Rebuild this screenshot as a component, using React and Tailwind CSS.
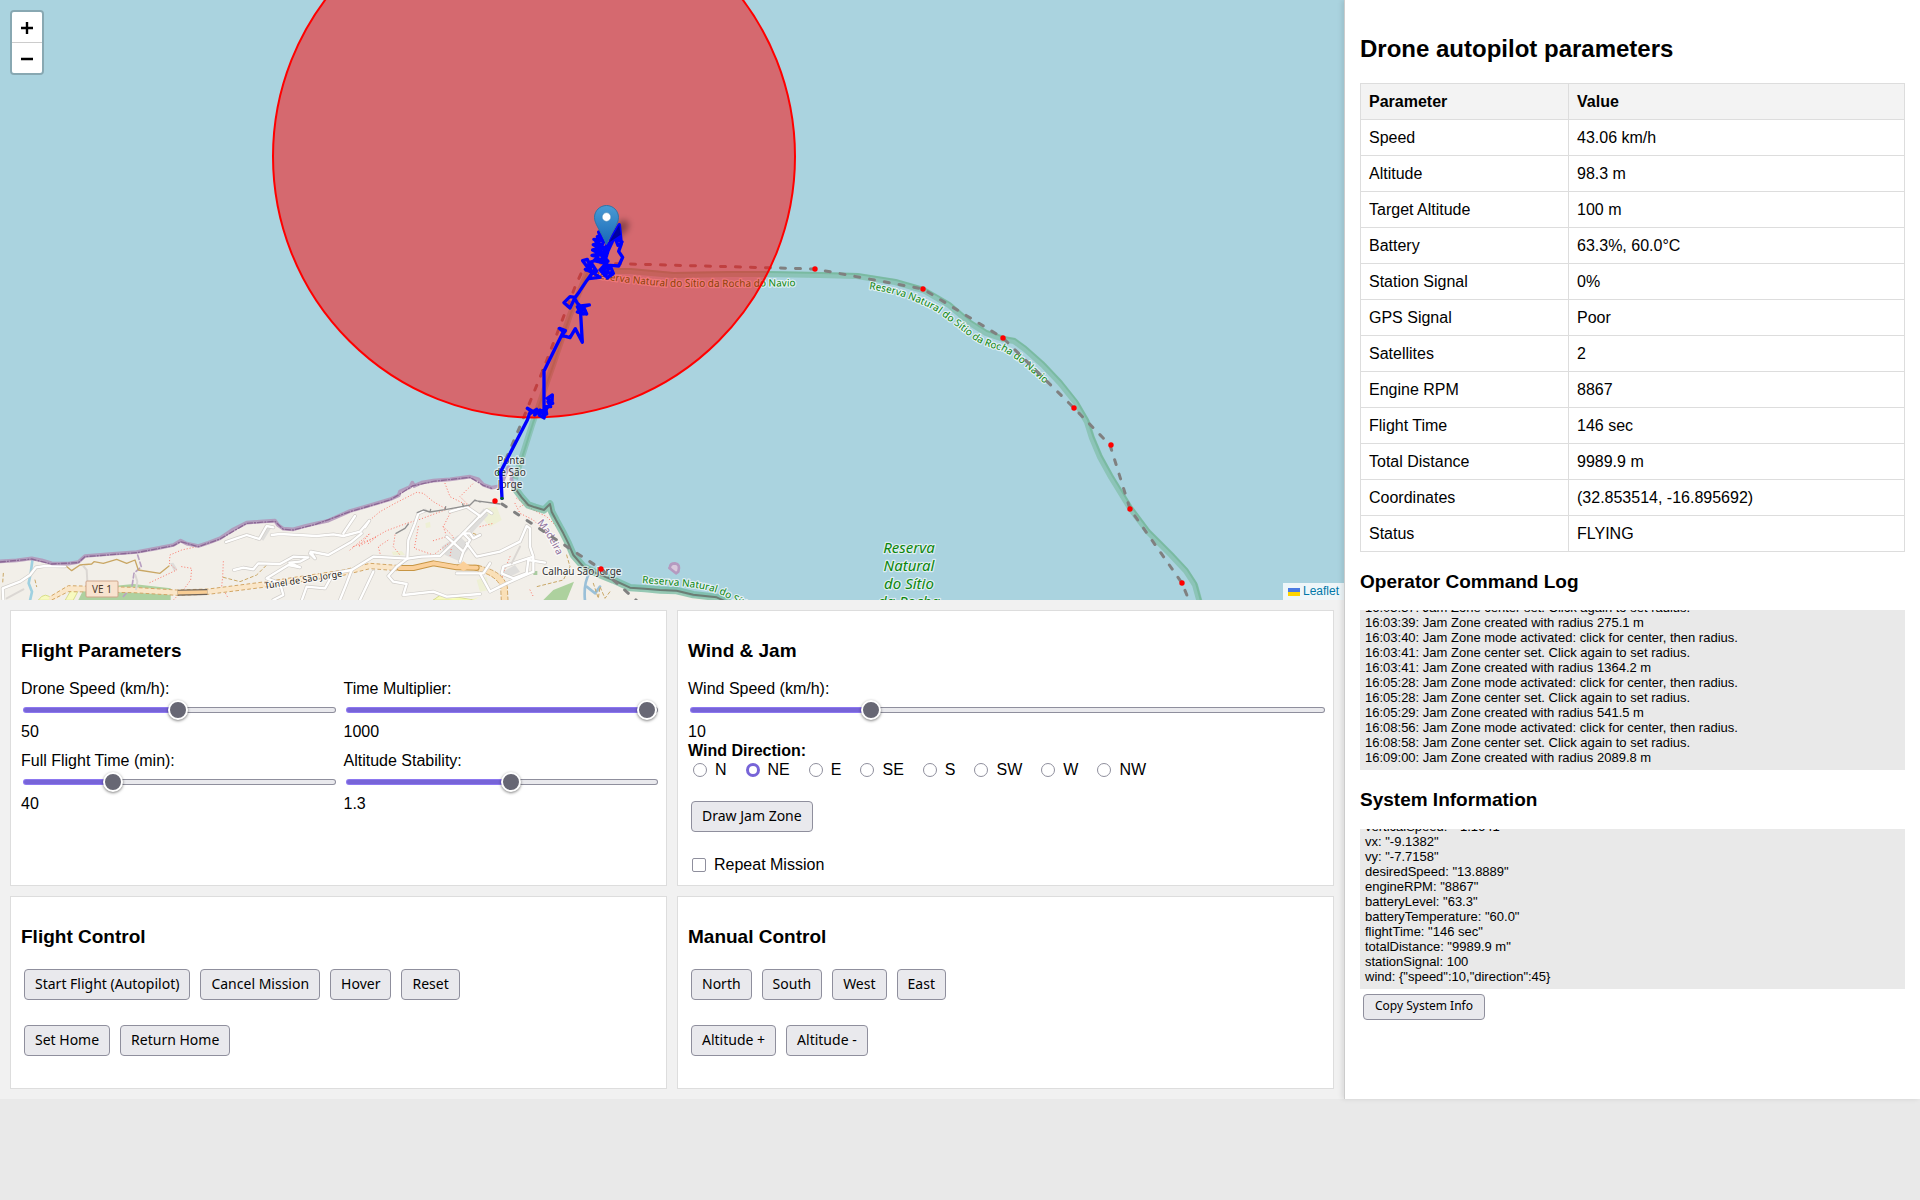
import React, { useState } from "react";

const PARAMETERS = [
  ["Speed", "43.06 km/h"],
  ["Altitude", "98.3 m"],
  ["Target Altitude", "100 m"],
  ["Battery", "63.3%, 60.0°C"],
  ["Station Signal", "0%"],
  ["GPS Signal", "Poor"],
  ["Satellites", "2"],
  ["Engine RPM", "8867"],
  ["Flight Time", "146 sec"],
  ["Total Distance", "9989.9 m"],
  ["Coordinates", "(32.853514, -16.895692)"],
  ["Status", "FLYING"],
];

const LOG = [
  "16:03:37: Jam Zone center set. Click again to set radius.",
  "16:03:39: Jam Zone created with radius 275.1 m",
  "16:03:40: Jam Zone mode activated: click for center, then radius.",
  "16:03:41: Jam Zone center set. Click again to set radius.",
  "16:03:41: Jam Zone created with radius 1364.2 m",
  "16:05:28: Jam Zone mode activated: click for center, then radius.",
  "16:05:28: Jam Zone center set. Click again to set radius.",
  "16:05:29: Jam Zone created with radius 541.5 m",
  "16:08:56: Jam Zone mode activated: click for center, then radius.",
  "16:08:58: Jam Zone center set. Click again to set radius.",
  "16:09:00: Jam Zone created with radius 2089.8 m",
];

const SYSTEM = [
  'verticalSpeed: "-1.1641"',
  'vx: "-9.1382"',
  'vy: "-7.7158"',
  'desiredSpeed: "13.8889"',
  'engineRPM: "8867"',
  'batteryLevel: "63.3"',
  'batteryTemperature: "60.0"',
  'flightTime: "146 sec"',
  'totalDistance: "9989.9 m"',
  "stationSignal: 100",
  'wind: {"speed":10,"direction":45}',
];

const DIRECTIONS = ["N", "NE", "E", "SE", "S", "SW", "W", "NW"];

const WAYPOINTS = [
  [495, 501], [601, 569], [815, 269], [923, 289], [1003, 338],
  [1074, 408], [1111, 445], [1130, 509], [1182, 583],
];

const COAST =
  "M0 364L50 361L95 355L125 361L155 370L205 371L235 366L255 348L330 342L410 336L470 325L520 315L542 302L560 311L595 318L625 308L660 295L700 268L740 248L790 244L825 242L835 256L850 266L880 268L915 258L950 250L985 242L1050 213L1110 196L1170 178L1196 166L1200 154L1230 141L1237 128L1242 138L1265 128L1300 122L1350 118L1410 110L1435 118L1450 134L1475 143L1497 139L1508 125L1515 105L1525 82L1538 100L1534 118L1545 145L1565 172L1585 195L1605 202L1632 210L1645 195L1655 192L1648 222L1668 240L1690 280L1705 310L1720 345L1750 380L1790 400L1840 420L1890 445L1935 450L1980 452L2030 455L2080 470L2150 475L2190 490";

const RESERVE_COAST =
  "M1545 145L1565 172L1585 195L1605 202L1632 210L1650 192L1655 215L1668 240L1690 280L1705 310L1720 345L1750 380L1790 400L1840 420L1890 443L1935 446L1980 450L2030 452L2080 464L2150 472L2190 490";

const RESERVE_SEA =
  "M515 479L532 425L553 365L570 315L587 273L604 271L630 271L673 275L730 274L767 274L820 275L857 276L895 282L923 290L949 305L970 323L986 333L1003 339L1014 341L1025 349L1043 365L1060 383L1076 403L1087 422L1092 438L1100 457L1111 477L1130 508L1148 532L1171 555L1186 571L1195 585L1200 603";

const TRACK =
  "M-54 925L-58 845L22 690L32 662L22 655L40 665L28 672L50 658L44 675L60 660L58 676L72 683L66 662L80 672L76 650L92 650L84 635L98 640L82 625L97 615L96 640L80 655L72 684L72 543L130 425L118 415L136 422L126 436L150 443L166 416L187 457L182 372L172 350L190 372L172 366L200 372L190 350L208 345L182 348L196 362L172 340L164 325L150 354L132 338L150 320L166 322L178 305L200 272L216 250L206 266L240 262L222 250L196 238L206 236L188 212L202 208L212 234L198 240L230 244L212 216L238 208L262 224L250 244L276 250L262 264L280 250L270 226L296 228L308 202L296 184L304 162L298 104L276 140L260 196L252 218L266 236L256 258L240 240L258 220L222 212L234 200L216 196L240 192L218 180L238 176L220 164L246 168L222 148L244 152L236 126L254 148L240 180L258 170L246 206L262 190L272 150L290 122L296 150L306 156L294 166L284 140L256 200L244 214L264 214L240 186L232 140L248 204L228 156L252 196L262 160";

const HALO = { paintOrder: "stroke", stroke: "#ffffff", strokeOpacity: 0.6, strokeWidth: 2.5, strokeLinejoin: "round" };

function FlightMap() {
  return (
    <section aria-label="Flight map" className="relative h-[600px] overflow-hidden bg-[#aad3df]">
      <svg className="block h-full w-full" viewBox="0 0 1344 600" preserveAspectRatio="xMidYMid slice" fontFamily="'Noto Sans', sans-serif" role="img">
        <defs>
          <linearGradient id="pin" x1="0" y1="0" x2="0" y2="1">
            <stop offset="0" stopColor="#4a9bd4" />
            <stop offset="1" stopColor="#1668b8" />
          </linearGradient>
          <filter id="soft" x="-50%" y="-50%" width="200%" height="200%">
            <feGaussianBlur stdDeviation="3" />
          </filter>
          <path id="labelWest" d="M593 278L630 283L670 287L720 287L830 286" />
          <path id="labelEast" d="M869 289Q905 294 937 312Q955 325 969 336Q981 346 1003 351Q1020 360 1050 389" />
          <path id="labelSouth" d="M642 583L678 586Q706 588 722 595L760 616" />
          <path id="labelTunnel" d="M265 589L352 575" />
          <path id="labelMadeira" d="M537 523Q549 536 562 566" />
        </defs>

        <g transform="translate(0 440) scale(0.33333)" fill="none" strokeLinecap="round" strokeLinejoin="round">
          <path d={COAST + "L0 500Z"} fill="#f2efe9" />
          <path d="M235 480L250 450L340 438L400 432L512 445L512 480Z" fill="#aed1a0" />
          <path d="M1630 480L1660 450L1722 425L1700 480Z" fill="#add19e" />
          <path d="M115 480Q135 450 160 480ZM196 480L212 452Q230 436 236 450L220 480ZM1300 480L1320 466L1375 472L1420 480Z" fill="#f7fabf" stroke="#c8cf70" strokeWidth="2" />
          <path d="M1340 482Q1370 470 1420 480L1438 471L1400 484Z" fill="#f3fbb0" />
          <path d="M1455 205L1490 200L1505 240L1470 260L1452 240ZM1430 420L1460 410L1468 450L1440 455ZM1276 250L1290 245L1292 262L1278 264ZM1175 335L1205 333L1215 345L1180 346Z" fill="#eef0d5" />
          <path d="M1325 320L1375 285L1412 320L1375 362L1335 345ZM1400 260L1452 205L1465 225L1415 280ZM1510 395L1545 375L1560 395L1520 415ZM778 295L800 258L815 262L790 302ZM510 370L520 368L532 388L522 394Z" fill="#dedddb" />
          <path d="M1600 393h12v12h-12z" fill="#a9cba0" />

          <path d="M97 362L92 400L86 430L96 455L90 482" stroke="#9fd0e0" strokeWidth="8" />
          <path d="M1768 400Q1750 430 1755 482M1760 440L1785 460L1800 440" stroke="#9ac0d8" strokeWidth="8" />
          <path d="M413 345L424 380L402 400L396 440L365 475" stroke="#b9a1c2" strokeWidth="5" strokeDasharray="14 8" />

          <g stroke="#fa8072" strokeWidth="3" strokeDasharray="1 8">
            <path d="M640 305L600 318L545 330L510 345L508 370L530 390L445 430M545 380L575 385L572 420L550 450L520 480M670 365L668 410L665 440L685 475" />
            <path d="M1110 240L1140 215L1185 190L1250 157L1270 160L1300 185L1340 208M1050 330L1110 280L1075 320L1160 272L1220 250L1260 238L1340 208M1060 320L1130 290L1100 315M1185 285L1180 320L1200 345M1140 340L1135 320L1165 300M1255 260L1243 325L1300 345L1360 300M1300 302L1340 290L1330 260L1350 220" />
            <path d="M1335 130L1350 170L1410 200M1400 190L1380 170L1420 130M1545 190L1560 220L1600 240L1640 280L1680 330M1550 175L1600 210L1640 230L1670 260M1530 350L1510 400L1500 430M1590 450L1600 470M1440 260L1480 250M1560 200L1580 190M1330 260L1360 290L1350 350" />
          </g>
          <g stroke="#c9a765" strokeWidth="4">
            <path d="M198 378L215 392L240 375L275 372L282 365L310 370L350 358L380 370L405 360L415 390L480 400L507 378" />
            <path d="M10 400L8 430M105 420L110 440M670 412L720 425L770 405L800 375M1420 280L1432 285M1700 345L1710 380L1690 420L1610 440M1780 430L1795 475L1800 440L1815 475L1830 455" strokeWidth="3" strokeDasharray="9 8" />
          </g>

          <path d="M155 475L205 445L400 450L530 458L625 455L790 434L1030 398L1110 376L1190 384" stroke="#fae6c8" strokeWidth="16" />
          <path d="M155 467L205 437L400 442L530 450L625 447L790 426L1030 390L1110 370L1190 376M155 480L205 455L400 458L530 466L625 463L790 442L1030 406L1110 386L1190 392" stroke="#d2a665" strokeWidth="3" strokeDasharray="11 7" strokeLinecap="butt" />
          <path d="M1425 382L1450 390Q1500 405 1512 440L1514 482" stroke="#fae0b8" strokeWidth="18" />
          <path d="M1435 376L1460 384Q1510 400 1522 440L1524 482M1425 390L1445 396Q1490 410 1502 440L1504 482" stroke="#d2a665" strokeWidth="3" strokeDasharray="11 7" />
          <path d="M533 458L622 456" stroke="#6d6258" strokeWidth="18" strokeLinecap="butt" />
          <path d="M533 458L622 456" stroke="#f8cd94" strokeWidth="11" strokeLinecap="butt" />
          <path d="M1198 384L1240 384L1300 370L1370 382L1430 383" stroke="#c79544" strokeWidth="18" />
          <path d="M1198 384L1240 384L1300 370L1370 382L1430 383" stroke="#fbd09a" strokeWidth="12" />
          <path d="M1372 378L1390 364L1412 380L1390 394Z" fill="#fbd09a" />

          {["#d0cdc9", "#ffffff"].map((color, i) => (
            <g key={color} stroke={color} strokeWidth={i === 0 ? 11 : 7}>
              <path d="M10 480L8 445L60 425L90 405L108 382L135 378L195 379" />
              <path d="M678 306L710 295L740 285L778 297L800 258L820 262M815 285L840 282L950 288L1000 283L1030 288L1080 275L1108 242L1095 262M1030 280L1065 228" />
              <path d="M702 390L730 383L760 388L775 370L840 372L880 350L925 352L900 365L868 368L900 382L865 375L800 415L840 430L850 465L820 480M930 340L945 355L932 335L985 345L1055 305L1085 280" />
              <path d="M905 482L920 440L975 445L1000 400L1055 390L1120 350L1222 356L1265 350L1320 348L1365 305L1440 228L1400 200L1350 215" />
              <path d="M1222 356L1225 300L1245 250L1255 220L1275 212M1055 390L1040 430L1020 480M1120 395L1080 480M1222 356L1190 380L1165 408L1180 425L1220 432L1210 465L1300 455L1340 470L1440 462" />
              <path d="M1340 290L1390 335L1380 365M1390 335L1410 300L1390 280L1410 280L1420 295L1440 285M1400 310L1430 350L1500 335L1560 305L1580 258L1590 265L1590 320L1600 350L1540 370L1510 380L1505 400L1540 415L1580 400L1585 360L1635 368M1600 350L1600 395L1520 430L1470 455L1440 400M1370 400L1450 400L1470 370M1440 230L1460 210L1475 220" />
            </g>
          ))}
          <path d="M250 378L260 390L262 425M406 405L412 425L408 448M20 475L70 448M1560 320L1535 370" stroke="#dbd7d3" strokeWidth="6" />
          <path d="M1188 280L1215 265L1225 252M1252 218L1270 210L1290 216L1340 208L1385 200L1410 195L1425 180L1440 186M1425 182L1500 192M1290 216L1292 208M1335 208L1337 200M1390 200L1388 192" stroke="#8f8f8f" strokeWidth="4" />

          <path d={RESERVE_COAST} stroke="#6fb89b" strokeOpacity="0.7" strokeWidth="22" />
          <path d={RESERVE_COAST} stroke="#6c7d74" strokeWidth="6" />
          <path d="M0 364L50 361L95 355L125 361L155 370L205 371L235 366L255 348L330 342L410 336L470 325L520 315L542 302L560 311L595 318L625 308L660 295L700 268L740 248L790 244L825 242L835 256L850 266L880 268L915 258L950 250L985 242L1050 213L1110 196L1170 178L1196 166L1200 154L1230 141L1237 128L1242 138L1265 128L1300 122L1350 118L1410 110L1435 118L1450 134L1475 143L1497 139L1508 125L1515 105L1525 82L1538 100L1534 118L1542 140" stroke="#b294b8" strokeOpacity="0.85" strokeWidth="11" />
          <path d="M0 366L95 357L155 372L235 368L255 350L410 338L520 317L542 305L595 320L660 297L740 250L825 244L850 268L880 270L950 252L1050 215L1170 180L1200 162L1237 138L1300 124L1410 112L1450 136L1475 145" stroke="#8a6795" strokeWidth="4" strokeDasharray="16 6 3 6" />
          <path d="M2010 382Q2010 370 2025 370Q2042 372 2035 395L2028 400Q2018 392 2008 384Z" fill="#d9c9dc" stroke="#b59ac0" strokeWidth="8" />
        </g>

        <path d={RESERVE_SEA} fill="none" stroke="#72b898" strokeOpacity="0.55" strokeWidth="6" strokeLinejoin="round" />
        <path d={RESERVE_SEA} transform="translate(1 -2)" fill="none" stroke="#5aa878" strokeOpacity="0.35" strokeWidth="2" />

        <g fontSize="10" fill="#0c860c" style={HALO}>
          <text><textPath href="#labelWest">Reserva Natural do Sítio da Rocha do Navio</textPath></text>
          <text><textPath href="#labelEast">Reserva Natural do Sítio da Rocha do Navio</textPath></text>
          <text><textPath href="#labelSouth">Reserva Natural do Sítio</textPath></text>
        </g>
        <g fontSize="15" fontStyle="italic" fill="#0c860c" textAnchor="middle" style={HALO}>
          <text x="909" y="553">Reserva</text>
          <text x="909" y="571">Natural</text>
          <text x="909" y="589">do Sítio</text>
          <text x="909" y="607">da Rocha</text>
        </g>
        <g fontSize="10" fill="#333333" style={HALO}>
          <text x="511" y="464" textAnchor="middle">Ponta</text>
          <text x="510" y="476" textAnchor="middle">de São</text>
          <text x="510" y="488" textAnchor="middle">Jorge</text>
          <text x="542" y="575">Calhau São Jorge</text>
        </g>
        <text fontSize="9" fill="#222222" style={HALO}><textPath href="#labelTunnel">Túnel de São Jorge</textPath></text>
        <text fontSize="10" fill="#8d6f9e" style={HALO}><textPath href="#labelMadeira">Madeira</textPath></text>
        <rect x="86" y="581" width="32" height="16" rx="1" fill="#f8e3cf" stroke="#cfa58a" />
        <text x="102" y="593" fontSize="10" fill="#4d3b2c" textAnchor="middle">VE 1</text>

        <circle cx="500" cy="473" r="2.5" fill="#087008" />
        <circle cx="543" cy="371" r="2" fill="#087008" />
        <g fill="none" stroke="#808080" strokeWidth="3" strokeDasharray="5 10" strokeLinecap="round" strokeLinejoin="round">
          <path d="M502 504L601 569L637 601" />
          <path d="M500 473L521 424L543 370L575 287L584 267L592 263L815 269L923 289L1003 338L1074 408L1110 445L1130 509L1182 583L1190 603" />
        </g>
        <g fill="#ff0000">
          {WAYPOINTS.map(([x, y]) => <circle key={x} cx={x} cy={y} r="2.7" />)}
        </g>
        <circle cx="534" cy="156.5" r="261" fill="#ff0000" fillOpacity="0.5" stroke="#ff0000" strokeWidth="2" />

        <path d="M607 243L616 224Q626 216 629 224Q630 232 610 243Z" fill="#000000" fillOpacity="0.35" filter="url(#soft)" />
        <g transform="translate(520 190) scale(0.33333)">
          <path d={TRACK} fill="none" stroke="#0000ff" strokeWidth="10" strokeLinecap="round" strokeLinejoin="round" />
          <circle cx="-54" cy="925" r="5" fill="#075c2c" />
          <path d="M266 158L298 104L302 134Z" fill="#0000a0" />
        </g>
        <g transform="translate(594 205)">
          <path d="M12.5 0.5C5.9 0.5 0.5 5.8 0.5 12.4C0.5 19 6 24.5 12.5 39.5C19 24.5 24.5 19 24.5 12.4C24.5 5.8 19.1 0.5 12.5 0.5Z" fill="url(#pin)" stroke="#2e74a8" />
          <circle cx="12.5" cy="12" r="4.4" fill="#ffffff" stroke="#3a7fb4" strokeWidth="0.6" />
        </g>
      </svg>

      <div className="absolute top-2.5 left-2.5 flex flex-col overflow-hidden rounded border-2 border-black/20 bg-clip-padding">
        <button type="button" aria-label="Zoom in" className="flex h-[31px] w-[30px] items-center justify-center border-b border-[#cccccc] bg-white pt-0.5">
          <svg width="12" height="12" viewBox="0 0 12 12" aria-hidden="true"><path d="M0 6H12M6 0V12" stroke="#000" strokeWidth="2.4" /></svg>
        </button>
        <button type="button" aria-label="Zoom out" className="flex h-[30px] w-[30px] items-center justify-center bg-white pt-0.5">
          <svg width="12" height="12" viewBox="0 0 12 12" aria-hidden="true"><path d="M0 6H12" stroke="#000" strokeWidth="2.4" /></svg>
        </button>
      </div>
      <div className="absolute right-0 bottom-0 bg-white/80 px-[5px] text-xs leading-[17px]">
        <a href="#leaflet" className="flex items-center gap-[3px] text-[#0078a8]">
          <svg width="12" height="8" viewBox="0 0 12 8" aria-hidden="true"><path fill="#4c7be1" d="M0 0h12v4H0z" /><path fill="#ffd500" d="M0 4h12v4H0z" /></svg>
          Leaflet
        </a>
      </div>
    </section>
  );
}

function Slider({ id, label, min, max, step = 1, initial }) {
  const [value, setValue] = useState(initial);
  const ratio = (value - min) / (max - min);
  const stop = `calc(10px + (100% - 20px) * ${ratio})`;
  return (
    <div className="flex flex-col">
      <label htmlFor={id} className="leading-[18px]">{label}</label>
      <div className="flex h-6 items-center">
        <input
          id={id}
          type="range"
          min={min}
          max={max}
          step={step}
          value={value}
          onChange={(e) => setValue(Number(e.target.value))}
          className="mx-0.5 h-1.5 w-full shrink-0 appearance-none rounded-full border border-transparent [&::-webkit-slider-thumb]:h-5 [&::-webkit-slider-thumb]:w-5 [&::-webkit-slider-thumb]:appearance-none [&::-webkit-slider-thumb]:rounded-full [&::-webkit-slider-thumb]:border-2 [&::-webkit-slider-thumb]:border-white [&::-webkit-slider-thumb]:bg-[#676774] [&::-webkit-slider-thumb]:shadow-[0_1px_3px_rgba(0,0,0,0.5)]"
          style={{
            background: `linear-gradient(to right, #7764d8 ${stop}, #e9e9ed ${stop}) padding-box, linear-gradient(to right, #8d78f0 ${stop}, #8f8f9d ${stop}) border-box`,
          }}
        />
      </div>
      <output htmlFor={id} className="leading-[19px]">{value}</output>
    </div>
  );
}

function Card({ title, children }) {
  return (
    <section className="border border-[#dddddd] bg-white p-2.5">
      <h3 className="my-[19px] text-[19px] leading-[21px] font-bold">{title}</h3>
      {children}
    </section>
  );
}

function Button({ children }) {
  return (
    <button type="button" className="h-[31px] rounded border border-[#8f8f9d] bg-[#e9e9ed] px-2.5 pb-0.5 font-['Noto_Sans',sans-serif] text-sm leading-[18px] whitespace-nowrap">
      {children}
    </button>
  );
}

function ButtonRows({ rows }) {
  return (
    <div className="flex flex-col gap-[25px] px-[3px] pt-[3px] pb-[22px]">
      {rows.map((row) => (
        <div key={row[0]} className="flex flex-wrap gap-2.5">
          {row.map((text) => <Button key={text}>{text}</Button>)}
        </div>
      ))}
    </div>
  );
}

function Console({ lines }) {
  return (
    <div className="flex h-40 flex-col justify-end overflow-hidden bg-[#e9e9e9] p-[5px] text-[13px] leading-[15px]">
      {lines.map((line) => <p key={line} className="shrink-0">{line}</p>)}
    </div>
  );
}

export default function App() {
  const [direction, setDirection] = useState("NE");
  return (
    <div className="min-h-screen bg-[#e9e9e9] font-['Liberation_Sans',Arial,sans-serif] text-base text-black">
      <div className="grid grid-cols-[7fr_3fr]">
        <main className="min-w-0 bg-[#f1f1f1]">
          <FlightMap />
          <div className="grid grid-cols-2 gap-2.5 p-2.5">
            <Card title="Flight Parameters">
              <div className="grid grid-cols-2 gap-x-2.5 gap-y-[11px]">
                <Slider id="speed" label="Drone Speed (km/h):" min={1} max={100} initial={50} />
                <Slider id="multiplier" label="Time Multiplier:" min={1} max={1000} initial={1000} />
                <Slider id="flight-time" label="Full Flight Time (min):" min={10} max={120} initial={40} />
                <Slider id="stability" label="Altitude Stability:" min={0.5} max={2} step={0.1} initial={1.3} />
              </div>
            </Card>
            <Card title="Wind & Jam">
              <Slider id="wind" label="Wind Speed (km/h):" min={0} max={36} initial={10} />
              <fieldset>
                <legend className="leading-[19px] font-bold">Wind Direction:</legend>
                <div className="flex h-5 items-center gap-[19px] pl-[5px]">
                  {DIRECTIONS.map((name) => (
                    <label key={name} className="flex items-center gap-2 leading-5">
                      <input
                        type="radio"
                        name="direction"
                        checked={direction === name}
                        onChange={() => setDirection(name)}
                        className="h-3.5 w-3.5 appearance-none rounded-full border border-[#8f8f9d] bg-white checked:border-3 checked:border-[#7764d8]"
                      />
                      {name}
                    </label>
                  ))}
                </div>
              </fieldset>
              <div className="mt-[21px] mb-[23px] flex pl-[3px]">
                <Button>Draw Jam Zone</Button>
              </div>
              <label className="mb-px flex items-center gap-2 pl-1 leading-[19px]">
                <input type="checkbox" className="h-3.5 w-3.5 appearance-none rounded-xs border border-[#8f8f9d] bg-white checked:bg-[#7764d8]" />
                Repeat Mission
              </label>
            </Card>
            <Card title="Flight Control">
              <ButtonRows rows={[["Start Flight (Autopilot)", "Cancel Mission", "Hover", "Reset"], ["Set Home", "Return Home"]]} />
            </Card>
            <Card title="Manual Control">
              <ButtonRows rows={[["North", "South", "West", "East"], ["Altitude +", "Altitude -"]]} />
            </Card>
          </div>
        </main>

        <aside className="relative min-w-0 border-l border-[#cccccc] bg-white p-[15px] shadow-[-2px_0_5px_rgba(0,0,0,0.1)]">
          <h2 className="my-5 text-2xl leading-7 font-bold">Drone autopilot parameters</h2>
          <table className="w-full border-collapse text-left leading-[19px]">
            <thead>
              <tr className="bg-[#f3f3f3]">
                <th className="w-[208px] border border-[#dddddd] p-2">Parameter</th>
                <th className="border border-[#dddddd] p-2">Value</th>
              </tr>
            </thead>
            <tbody>
              {PARAMETERS.map(([name, value]) => (
                <tr key={name}>
                  <td className="border border-[#dddddd] p-2">{name}</td>
                  <td className="border border-[#dddddd] p-2">{value}</td>
                </tr>
              ))}
            </tbody>
          </table>
          <h3 className="mt-[19px] mb-[18px] text-[19px] leading-[21px] font-bold">Operator Command Log</h3>
          <Console lines={LOG} />
          <h3 className="my-[19px] text-[19px] leading-[21px] font-bold">System Information</h3>
          <Console lines={SYSTEM} />
          <button type="button" className="mt-[5px] ml-[3px] h-[26px] rounded border border-[#8f8f9d] bg-[#e9e9ed] px-[11px] pb-0.5 font-['Noto_Sans',sans-serif] text-xs leading-4">
            Copy System Info
          </button>
        </aside>
      </div>
    </div>
  );
}
